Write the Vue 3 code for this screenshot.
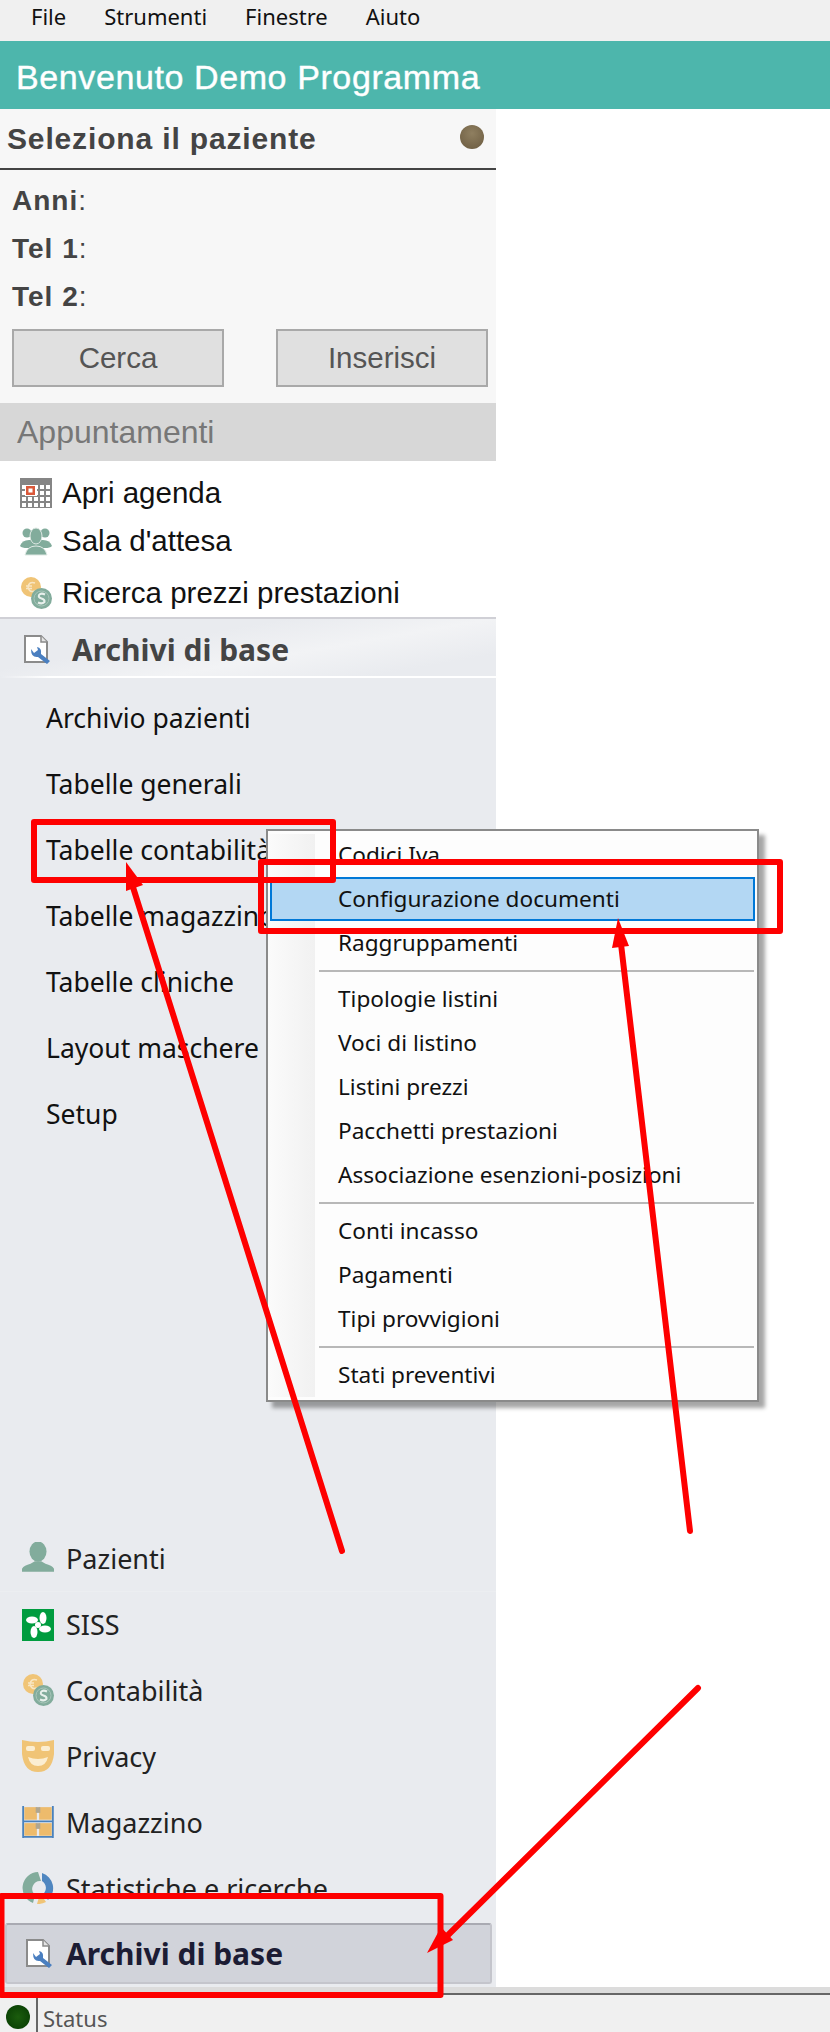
<script setup>
const menuBar = ['File', 'Strumenti', 'Finestre', 'Aiuto']
const infoRows = ['Anni', 'Tel 1', 'Tel 2']

const appuntamenti = [
  { label: 'Apri agenda', icon: 'calendar' },
  { label: "Sala d'attesa", icon: 'group' },
  { label: 'Ricerca prezzi prestazioni', icon: 'coins' }
]

const archivi = [
  'Archivio pazienti',
  'Tabelle generali',
  'Tabelle contabilità',
  'Tabelle magazzino',
  'Tabelle cliniche',
  'Layout maschere',
  'Setup'
]

const moduli = [
  { label: 'Pazienti', icon: 'person' },
  { label: 'SISS', icon: 'siss' },
  { label: 'Contabilità', icon: 'coins' },
  { label: 'Privacy', icon: 'mask' },
  { label: 'Magazzino', icon: 'shelf' },
  { label: 'Statistiche e ricerche', icon: 'chart' }
]

// gruppi del menu contestuale, tra un gruppo e l'altro va il separatore
const gruppiMenu = [
  ['Codici Iva', 'Configurazione documenti', 'Raggruppamenti'],
  ['Tipologie listini', 'Voci di listino', 'Listini prezzi', 'Pacchetti prestazioni', 'Associazione esenzioni-posizioni'],
  ['Conti incasso', 'Pagamenti', 'Tipi provvigioni'],
  ['Stati preventivi']
]

// celle bianche del calendario
const celle = []
for (let r = 0; r < 4; r++) {
  for (let c = 0; c < 5; c++) {
    celle.push({ x: 2 + c * 6, y: 7 + r * 6, key: r + '-' + c })
  }
}
</script>

<template>
  <div class="pagina">
    <svg class="defs" width="0" height="0">
      <symbol id="i-calendar" viewBox="0 0 32 30">
        <rect width="32" height="30" fill="#858585" />
        <rect v-for="c in celle" :key="c.key" :x="c.x" :y="c.y" width="4" height="4" fill="#fff" />
        <rect x="5" y="7" width="12" height="11" fill="#fff" />
        <rect x="6" y="8" width="9" height="9" fill="#d9583a" />
        <rect x="8.5" y="10.5" width="4" height="4" fill="#fff" />
      </symbol>
      <symbol id="i-group" viewBox="0 0 32 28">
        <circle cx="7" cy="6" r="4.5" fill="#82ac9c" />
        <circle cx="25" cy="6" r="4.5" fill="#82ac9c" />
        <path d="M0 19 Q2 13 9 13 L23 13 Q30 13 32 19 Q30 21 25 21 L7 21 Q2 21 0 19Z" fill="#82ac9c" />
        <ellipse cx="16" cy="9" rx="6" ry="8" fill="#82ac9c" stroke="#dfe9e4" stroke-width="1" />
        <path d="M5 28 Q7 19 16 19 Q25 19 27 28Z" fill="#82ac9c" stroke="#dfe9e4" stroke-width="1" />
      </symbol>
      <symbol id="i-coins" viewBox="0 0 32 32">
        <circle cx="11" cy="10" r="10" fill="#f0c476" />
        <path d="M15 6 Q9 4 8 10 Q9 16 15 14 M6 9 H12 M6 11.500 H12" fill="none" stroke="#f8e6c4" stroke-width="1.5" />
        <circle cx="21.500" cy="21.500" r="10.500" fill="#82ac9c" />
        <circle cx="21.500" cy="21.500" r="7.500" fill="none" stroke="#a9c6ba" stroke-width="1" />
        <path d="M25 17.500 Q21 15.500 19 18 Q18 20.500 21.500 21.500 Q25 22.500 24.500 25 Q22 27.500 18 25.500" fill="none" stroke="#e8f0ec" stroke-width="2" />
      </symbol>
      <symbol id="i-doc" viewBox="0 0 28 30">
        <path d="M1 1 H17 L23 7 V27 H1Z" fill="#fff" stroke="#8b8b8b" stroke-width="2" />
        <path d="M17 1 V7 H23" fill="#e4e4e4" stroke="#8b8b8b" stroke-width="1.500" />
        <path d="M7 14 L10 18 L14 15 L13 12 Q18 13 17 19 L26 26 L23 29 L14 22 Q7 23 7 14Z" fill="#4a7fc0" />
      </symbol>
      <symbol id="i-person" viewBox="0 0 30 30">
        <ellipse cx="15" cy="9" rx="8" ry="9.500" fill="#82ac9c" />
        <path d="M0 28 V25 Q2 22 8 20.500 L12 18 H18 L22 20.500 Q28 22 30 25 V28Z" fill="#82ac9c" />
      </symbol>
      <symbol id="i-siss" viewBox="0 0 32 32">
        <rect width="32" height="32" fill="#009c3f" />
        <g fill="#fff">
          <ellipse cx="10" cy="11" rx="6" ry="3.500" />
          <ellipse cx="21" cy="9" rx="3.500" ry="6" />
          <ellipse cx="23" cy="20" rx="6" ry="3.500" />
          <ellipse cx="12" cy="23" rx="3.500" ry="6" />
          <circle cx="16" cy="16" r="3" />
        </g>
      </symbol>
      <symbol id="i-mask" viewBox="0 0 32 32">
        <path d="M0 0 Q16 4 32 0 V14 Q30 32 16 32 Q2 32 0 14Z" fill="#f0c476" />
        <rect x="4" y="6" width="9" height="5" rx="2" fill="#fbeed2" />
        <rect x="19" y="6" width="9" height="5" rx="2" fill="#fbeed2" />
        <path d="M6 17 Q16 21 26 17 Q24 26 16 26 Q8 26 6 17Z" fill="#fbeed2" />
      </symbol>
      <symbol id="i-shelf" viewBox="0 0 28 28">
        <rect x="2" y="1" width="11" height="11" fill="#edbb6c" />
        <rect x="15" y="1" width="11" height="11" fill="#edbb6c" />
        <rect x="2" y="15" width="11" height="11" fill="#edbb6c" />
        <rect x="15" y="15" width="11" height="11" fill="#edbb6c" />
        <rect x="12" y="1" width="4" height="5" fill="#b0a68f" />
        <rect x="12" y="15" width="4" height="5" fill="#b0a68f" />
        <path d="M1 0 V28 M27 0 V28 M1 13.500 H27 M1 27 H27" fill="none" stroke="#4a82bd" stroke-width="1.600" />
      </symbol>
      <symbol id="i-chart" viewBox="0 0 32 32">
        <path d="M16 0 A16 16 0 0 0 11 31 L13 23 A8 8 0 0 1 19 9Z" fill="#82ac9c" />
        <path d="M20 1 A16 16 0 0 1 26 28 L21 22 A8 8 0 0 0 20 9Z" fill="#4f86c0" />
        <path d="M15 32 A16 16 0 0 0 24 30 L20 24 Q18 25 17 25Z" fill="#f0c476" />
      </symbol>
    </svg>

    <nav class="barra-menu">
      <span v-for="voce in menuBar" :key="voce" class="voce-menu">{{ voce }}</span>
    </nav>
    <header class="titolo">Benvenuto Demo Programma</header>

    <div class="corpo">
      <aside class="laterale">
        <section class="paziente">
          <div class="paziente-testa">
            <span>Seleziona il paziente</span>
            <i class="led"></i>
          </div>
          <div class="info">
            <p v-for="riga in infoRows" :key="riga"><b>{{ riga }}</b>:</p>
          </div>
          <div class="bottoni">
            <button type="button">Cerca</button>
            <button type="button">Inserisci</button>
          </div>
        </section>

        <div class="banda">Appuntamenti</div>
        <ul class="appuntamenti">
          <li v-for="a in appuntamenti" :key="a.label">
            <svg class="ico"><use :href="'#i-' + a.icon" /></svg>
            {{ a.label }}
          </li>
        </ul>

        <div class="archivi">
          <div class="archivi-testa">
            <svg class="ico-doc"><use href="#i-doc" /></svg>
            <span>Archivi di base</span>
          </div>
          <ul class="archivi-lista">
            <li v-for="voce in archivi" :key="voce">{{ voce }}</li>
          </ul>

          <ul class="moduli">
            <li v-for="m in moduli" :key="m.label">
              <svg class="ico"><use :href="'#i-' + m.icon" /></svg>
              {{ m.label }}
            </li>
          </ul>
          <div class="modulo-attivo">
            <svg class="ico-doc"><use href="#i-doc" /></svg>
            <span>Archivi di base</span>
          </div>
        </div>
      </aside>
    </div>

    <footer class="stato">
      <i class="led-verde"></i>
      <span>Status</span>
    </footer>

    <!-- menu contestuale sopra la barra laterale -->
    <div class="popup">
      <div class="popup-gutter"></div>
      <template v-for="(gruppo, i) in gruppiMenu" :key="i">
        <div v-if="i > 0" class="sep"></div>
        <div
          v-for="voce in gruppo"
          :key="voce"
          class="popup-voce"
          :class="{ attiva: voce === 'Configurazione documenti' }"
        >{{ voce }}</div>
      </template>
    </div>

    <!-- annotazioni rosse disegnate sullo screenshot -->
    <svg class="note" width="830" height="2032" viewBox="0 0 830 2032">
      <g fill="none" stroke="#fe0000" stroke-width="6" stroke-linejoin="round" stroke-linecap="round">
        <rect x="34" y="822" width="299" height="58" />
        <rect x="261" y="862" width="519" height="69" />
        <rect x="1.500" y="1896" width="439" height="99" />
        <path d="M342 1551 L132 884" />
        <path d="M690 1531 L621 944" />
        <path d="M698 1688 L442 1941" />
      </g>
      <g fill="#fe0000">
        <path d="M126 862 L143 885 L126 891Z" />
        <path d="M618 918 L629 946 L612 948Z" />
        <path d="M427 1953 L453 1940 L441 1927Z" />
      </g>
    </svg>
  </div>
</template>

<style scoped>
.pagina {
  position: relative;
  width: 830px;
  height: 2032px;
  display: flex;
  flex-direction: column;
  overflow: hidden;
  background: #fff;
  font-family: "Liberation Sans", Arial, sans-serif;
  color: #111;
}

.defs {
  position: absolute;
}

ul {
  list-style: none;
  margin: 0;
  padding: 0;
}

.barra-menu {
  height: 41px;
  flex: none;
  display: flex;
  align-items: center;
  padding: 0 0 10px 31px;
  box-sizing: border-box;
  gap: 38px;
  background: #f0f0f0;
  font-family: "Noto Sans", sans-serif;
  font-size: 22px;
}

.titolo {
  height: 68px;
  flex: none;
  box-sizing: border-box;
  padding: 17px 0 0 16px;
  background: #4db6ac;
  color: #fff;
  font-size: 34px;
  letter-spacing: 0.6px;
  line-height: 38px;
  -webkit-text-stroke: 0.4px #fff;
}

.corpo {
  flex: 1;
  display: flex;
  min-height: 0;
}

.laterale {
  width: 496px;
  display: flex;
  flex-direction: column;
}

.paziente {
  height: 294px;
  flex: none;
  background: #f7f7f7;
  color: #444;
}

.paziente-testa {
  height: 61px;
  box-sizing: border-box;
  border-bottom: 2px solid #444;
  display: flex;
  align-items: center;
  justify-content: space-between;
  padding: 0 12px 0 7px;
  font-size: 30px;
  letter-spacing: 0.85px;
  font-weight: 700;
}

.led {
  width: 24px;
  height: 24px;
  margin-bottom: 4px;
  border-radius: 50%;
  background: radial-gradient(circle at 50% 35%, #8f7f60, #6a5a3f);
}

.info {
  padding-top: 7px;
  font-size: 28px;
}

.info p {
  margin: 0;
  height: 48px;
  line-height: 48px;
  padding-left: 12px;
  letter-spacing: 1px;
}

.bottoni {
  display: flex;
  justify-content: space-between;
  margin-top: 8px;
  padding: 0 8px 0 12px;
}

.bottoni button {
  width: 212px;
  height: 58px;
  box-sizing: border-box;
  border: 2px solid #a9a9a9;
  background: #e0e0e0;
  color: #555;
  font-family: inherit;
  font-size: 29.500px;
  padding: 0;
}

.banda {
  height: 58px;
  flex: none;
  box-sizing: border-box;
  padding-left: 17px;
  background: #d7d7d7;
  color: #777;
  font-size: 32px;
  line-height: 58px;
}

.appuntamenti {
  height: 156px;
  flex: none;
  box-sizing: border-box;
  padding-top: 8px;
}

.appuntamenti li {
  height: 48px;
  display: flex;
  align-items: center;
  gap: 10px;
  padding-left: 20px;
  font-size: 29.500px;
}

.appuntamenti li:last-child {
  padding-top: 4px;
}

.ico {
  width: 32px;
  height: 32px;
  flex: none;
}

.ico-doc {
  width: 28px;
  height: 30px;
  flex: none;
}

.archivi {
  flex: 1;
  display: flex;
  flex-direction: column;
  min-height: 0;
  border-top: 2px solid #d0d0d6;
  background: #e9ebef;
}

.archivi-testa {
  height: 59px;
  flex: none;
  box-sizing: border-box;
  display: flex;
  align-items: center;
  gap: 20px;
  padding: 4px 0 0 24px;
  border-bottom: 2px solid;
  border-image: linear-gradient(to right, #e9ebef, #fff 10%, #fff 100%) 1;
  background: linear-gradient(170deg, #e9ebef 35%, #f2f3f5 60%, #e9ebef 85%);
  color: #444;
  font-family: "Noto Sans", sans-serif;
  font-size: 30px;
  font-weight: 700;
}

.archivi-lista {
  padding-top: 7px;
  font-family: "Noto Sans", sans-serif;
  font-size: 26.500px;
}

.archivi-lista li {
  height: 66px;
  line-height: 66px;
  padding-left: 46px;
  white-space: nowrap;
}

.moduli {
  margin-top: auto;
  margin-bottom: 2px;
  font-family: "Noto Sans", sans-serif;
  font-size: 27px;
  color: #222;
}

.moduli li {
  height: 66px;
  box-sizing: border-box;
  display: flex;
  align-items: center;
  gap: 12px;
  padding-left: 22px;
}

.moduli li:nth-child(2) {
  border-top: 1px solid #eceef1;
}

.modulo-attivo {
  height: 61px;
  flex: none;
  box-sizing: border-box;
  margin: 0 4px 3px 5px;
  display: flex;
  align-items: center;
  gap: 12px;
  padding-left: 19px;
  border: 2px solid #c4c5cc;
  border-top-color: #a9aab2;
  border-radius: 3px;
  background: #d1d3da;
  color: #1c1c34;
  font-family: "Noto Sans", sans-serif;
  font-size: 30px;
  font-weight: 700;
}

.stato {
  height: 45px;
  flex: none;
  box-sizing: border-box;
  display: flex;
  border-top: 6px solid #dcdcdc;
  box-shadow: inset 0 2px 0 #666;
  background: #f0f0f0;
  padding-left: 6px;
  font-family: "Noto Sans", sans-serif;
  font-size: 22px;
  color: #555;
}

.led-verde {
  width: 24px;
  height: 24px;
  margin-top: 12px;
  border-radius: 50%;
  background: radial-gradient(circle at 50% 50%, #1b5c0d, #063a02);
}

.stato span {
  margin: 2px 0 0 6px;
  padding-left: 5px;
  border-left: 2px solid #666;
  line-height: 46px;
}

.popup {
  position: absolute;
  left: 266px;
  top: 829px;
  width: 493px;
  height: 573px;
  box-sizing: border-box;
  padding: 2px;
  border: 2px solid #8a8a8a;
  background: #fdfdfd;
  box-shadow: 6px 6px 4px rgba(0, 0, 0, 0.35);
  font-family: "Noto Sans", sans-serif;
  font-size: 22.600px;
  color: #111;
}

.popup-gutter {
  position: absolute;
  left: 0;
  top: 3px;
  width: 47px;
  bottom: 3px;
  background: linear-gradient(to right, #fbfbfb, #f1f1f1);
}

.popup-voce {
  position: relative;
  height: 44px;
  box-sizing: border-box;
  padding-left: 68px;
  line-height: 44px;
  white-space: nowrap;
}

.popup-voce.attiva {
  border: 2px solid #0078d7;
  background: #b3d7f3;
  padding-left: 66px;
  line-height: 40px;
}

.sep {
  position: relative;
  height: 2px;
  margin: 5px 1px 5px 49px;
  background: #b8b8b8;
}

.note {
  position: absolute;
  left: 0;
  top: 0;
  pointer-events: none;
}
</style>
